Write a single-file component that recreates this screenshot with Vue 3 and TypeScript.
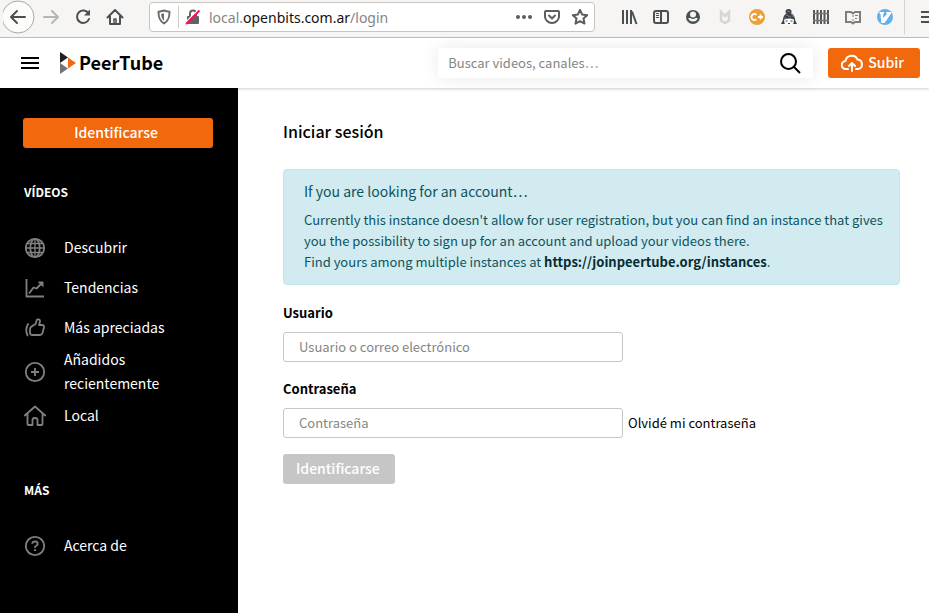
<script setup lang="ts">
import { ref } from 'vue'

interface MenuEntry {
  label: string
  icon: 'globe' | 'trending' | 'like' | 'add' | 'home' | 'help'
}

interface MenuSection {
  title: string
  entries: MenuEntry[]
}

const sections: MenuSection[] = [
  {
    title: 'Vídeos',
    entries: [
      { label: 'Descubrir', icon: 'globe' },
      { label: 'Tendencias', icon: 'trending' },
      { label: 'Más apreciadas', icon: 'like' },
      { label: 'Añadidos recientemente', icon: 'add' },
      { label: 'Local', icon: 'home' },
    ],
  },
  {
    title: 'Más',
    entries: [{ label: 'Acerca de', icon: 'help' }],
  },
]

const search = ref('')
const username = ref('')
const password = ref('')
</script>

<template>
  <div class="window">
    <div class="toolbar">
      <div class="nav-buttons">
        <button type="button" class="tool back" aria-label="Atrás">
          <svg width="32" height="34" viewBox="0 0 32 34" fill="none">
            <circle cx="15" cy="17" r="16" fill="#fcfcfb" stroke="#aaa8a6" />
            <path d="M14 11 8 17l6 6M8 17H22" stroke="#4a4f52" stroke-width="2" stroke-linecap="round" stroke-linejoin="round" />
          </svg>
        </button>
        <button type="button" class="tool" aria-label="Adelante">
          <svg width="18" height="18" viewBox="0 0 18 18" fill="none" stroke="#b5b6b6" stroke-width="2" stroke-linecap="round" stroke-linejoin="round">
            <path d="M2 9h14M10 3l6 6-6 6" />
          </svg>
        </button>
        <button type="button" class="tool" aria-label="Recargar">
          <svg width="18" height="18" viewBox="0 0 18 18" fill="none" stroke="#4a4f52" stroke-width="2">
            <path d="M14.500 5.500A6.200 6.200 0 1 0 15 11" stroke-linecap="round" />
            <path d="M16 1.500v6h-6z" fill="#4a4f52" stroke="none" />
          </svg>
        </button>
        <button type="button" class="tool" aria-label="Inicio">
          <svg width="18" height="18" viewBox="0 0 18 18" fill="none" stroke="#4a4f52" stroke-width="2" stroke-linecap="round" stroke-linejoin="round">
            <path d="M1.500 9.500 9 2l7.500 7.500M4 8v8h10V8" />
            <path d="M8 16v-5h2v5" stroke-width="1.500" />
          </svg>
        </button>
      </div>

      <div class="address">
        <svg width="16" height="16" viewBox="0 0 16 16" fill="none">
          <path d="M8 1.500c2 .8 3.600 1.100 5.500 1.200 0 5.500-.8 9-5.500 11.800C3.300 11.700 2.500 8.200 2.500 2.700 4.400 2.600 6 2.300 8 1.500z" stroke="#6b6b6b" stroke-width="2" stroke-linejoin="round" />
          <path d="M8 4.300v7.400C5.800 10 5.300 8 5.200 5z" fill="#6b6b6b" />
        </svg>
        <span class="address-rule"></span>
        <svg width="16" height="16" viewBox="0 0 16 16" fill="none">
          <path d="M5 8V4.500a3 3 0 0 1 6 0V8" stroke="#636363" stroke-width="2" />
          <rect x="2" y="7" width="12" height="8" rx="1" fill="#636363" />
          <path d="M1 13.500 13 1.500" stroke="#fff" stroke-width="2" />
          <path d="M1 15 14.500 1.500" stroke="#f5134d" stroke-width="2" />
        </svg>
        <span class="url">local.<b>openbits.com.ar</b>/login</span>
        <button type="button" class="address-tool" aria-label="Acciones de página">
          <svg width="18" height="18" viewBox="0 0 18 18" fill="#5c5c5c">
            <circle cx="3" cy="9" r="2" /><circle cx="9" cy="9" r="2" /><circle cx="15" cy="9" r="2" />
          </svg>
        </button>
        <button type="button" class="address-tool" aria-label="Pocket">
          <svg width="18" height="18" viewBox="0 0 18 18" fill="none" stroke="#5c5c5c" stroke-width="2" stroke-linecap="round" stroke-linejoin="round">
            <path d="M3 3h12q1 0 1 1v4.500a7 6.500 0 0 1-14 0V4q0-1 1-1z" />
            <path d="M6 7.500 9 10.500l3-3" />
          </svg>
        </button>
        <button type="button" class="address-tool" aria-label="Marcador">
          <svg width="18" height="18" viewBox="0 0 18 18" fill="none" stroke="#5c5c5c" stroke-width="2" stroke-linejoin="round">
            <path d="m9 2 2.200 4.600 5 .6-3.700 3.400 1 5L9 13.200l-4.500 2.400 1-5L1.800 7.200l5-.6z" />
          </svg>
        </button>
      </div>

      <div class="extensions">
        <button type="button" class="tool" aria-label="Biblioteca">
          <svg width="18" height="18" viewBox="0 0 18 18" fill="none" stroke="#4a4f52" stroke-width="2">
            <path d="M3 2v14M7 2v14M11 2v14M12 3.500 16.500 16" />
          </svg>
        </button>
        <button type="button" class="tool" aria-label="Barra lateral">
          <svg width="18" height="18" viewBox="0 0 18 18" fill="none" stroke="#4a4f52" stroke-width="2">
            <rect x="2" y="3" width="14" height="12" rx="2" />
            <path d="M9 3v12" />
            <path d="M4 5.500h3M4 7.500h3M4 9.500h3" stroke-width="1" />
          </svg>
        </button>
        <button type="button" class="tool" aria-label="Cuenta">
          <svg width="18" height="18" viewBox="0 0 18 18">
            <circle cx="9" cy="9" r="7" fill="#4a4f52" />
            <circle cx="9" cy="6.500" r="3" fill="#f6f5f4" />
            <path d="M4.300 10h2.200q2.500 2 5 0h2.200q-.8 3.500-4.700 3.500T4.300 10z" fill="#f6f5f4" />
          </svg>
        </button>
        <button type="button" class="tool" aria-label="Protección web">
          <svg width="18" height="18" viewBox="0 0 18 18" fill="none" stroke="#d6d6d5" stroke-width="2.500">
            <path d="M5 12.500V4l4 4 4-4v8.500L9 15z" />
          </svg>
        </button>
        <button type="button" class="tool" aria-label="C+">
          <svg width="18" height="18" viewBox="0 0 18 18" fill="none" stroke="#fff" stroke-width="1.800">
            <circle cx="9" cy="9" r="8" fill="#eba03a" stroke="none" />
            <path d="M8.500 6.800a3 3 0 1 0 0 4.400M10 9h5M12.500 6.500v5" />
          </svg>
        </button>
        <button type="button" class="tool" aria-label="Gestor de notas">
          <svg width="18" height="18" viewBox="0 0 18 18">
            <path d="M9 5c4 0 6 3.500 6 7l2 4H1l2-4c0-3.500 2-7 6-7z" fill="#3c3f43" />
            <ellipse cx="8.500" cy="3.500" rx="3" ry="2.500" fill="#3c3f43" />
            <path d="M4 11.500q5-2 10 0l-.5 4q-4.500 2.500-9 0z" fill="#fff" />
            <path d="m6 7 5 2M7 3l3 1M11.500 6.500l2.500 3M4.500 9.500l2 1" stroke="#678aa8" />
            <path d="M5.500 13h2M10.500 13h2M8 15.500h2" stroke="#3c3f43" />
          </svg>
        </button>
        <button type="button" class="tool" aria-label="Contenedores">
          <svg width="18" height="18" viewBox="0 0 18 18" stroke="#555" stroke-width="2">
            <path d="M2 2v14M5.500 2v14M9 2v14M12.500 2v14M16 2v14" />
            <path d="M1 5.500h16M1 12.500h16" stroke="#777" stroke-width="1.500" />
          </svg>
        </button>
        <button type="button" class="tool" aria-label="Lectura">
          <svg width="18" height="18" viewBox="0 0 18 18" fill="none" stroke="#7d7d7d" stroke-width="2">
            <path d="M2 4h5l2 1.500L11 4h5v10h-5l-2 1.500L7 14H2z" />
            <path d="M9 7v2M9 11v2M11 7.500h3M11 10.500h2" stroke-width="1" />
          </svg>
        </button>
        <button type="button" class="tool" aria-label="Vimium">
          <svg width="18" height="18" viewBox="0 0 18 18">
            <circle cx="9" cy="9" r="8" fill="#62b0e8" />
            <path d="M3.500 4h4.500v1.500l-.8.500v4L11 6l-.8-.5V4h5v1.500L8.500 15H5.300L4.500 6l-1-.5z" fill="#fff" />
          </svg>
        </button>
        <span class="toolbar-rule"></span>
        <button type="button" class="tool menu-tool" aria-label="Menú">
          <svg width="18" height="18" viewBox="0 0 18 18" stroke="#4a4f52" stroke-width="2">
            <path d="M1 4h16M1 9h16M1 14h16" />
          </svg>
        </button>
      </div>
    </div>

    <header class="header">
      <button type="button" class="burger" aria-label="Mostrar menú">
        <svg width="18" height="14" viewBox="0 0 18 14" stroke="#000" stroke-width="2">
          <path d="M0 2h18M0 7h18M0 12h18" />
        </svg>
      </button>
      <a class="brand" href="#">
        <svg width="16" height="22" viewBox="0 0 16 22">
          <path d="M0 0v11l8-5.500z" fill="#211f20" />
          <path d="M0 11v11l8-5.500z" fill="#737373" />
          <path d="M8 5.500v11l8-5.500z" fill="#f1680d" />
        </svg>
        <span>PeerTube</span>
      </a>
      <form class="search" @submit.prevent>
        <input v-model="search" type="text" aria-label="Buscar" placeholder="Buscar videos, canales…" />
        <button type="submit" aria-label="Buscar">
          <svg width="22" height="22" viewBox="0 0 22 22" fill="none" stroke="#000" stroke-width="2">
            <circle cx="9.500" cy="9.500" r="7.500" />
            <path d="m14.500 14.500 6.500 6.500" />
          </svg>
        </button>
      </form>
      <a class="upload" href="#">
        <svg width="22" height="18" viewBox="0 0 22 18" fill="none" stroke="#fff" stroke-width="2" stroke-linecap="round" stroke-linejoin="round">
          <path d="M7 15H5a4 4 0 0 1-.5-8A6.300 6.300 0 0 1 16.500 5.500 4.800 4.800 0 0 1 17 15h-2" />
          <path d="M11 17V9M8 12l3-3 3 3" />
        </svg>
        <span>Subir</span>
      </a>
    </header>

    <div class="body">
      <nav class="sidebar">
        <a class="login-link" href="#">Identificarse</a>
        <section v-for="section in sections" :key="section.title" class="menu-section">
          <h2>{{ section.title }}</h2>
          <a v-for="entry in section.entries" :key="entry.label" class="menu-entry" href="#">
            <svg width="22" height="22" viewBox="0 0 22 22" fill="none" stroke="#808080" stroke-width="1.800" stroke-linejoin="round">
              <template v-if="entry.icon === 'globe'">
                <circle cx="11" cy="11" r="9.200" />
                <ellipse cx="11" cy="11" rx="4.700" ry="9.200" />
                <path d="M11 2v18M2 11h18M3.500 6.500h15M3.500 15.500h15" stroke-width="1.300" />
              </template>
              <template v-else-if="entry.icon === 'trending'">
                <path d="M2.500 2v17.500H20" />
                <path d="m5 16.500 4.500-6 3 1L18 6" />
                <path d="M14.500 5H19v4.500z" fill="#808080" stroke-width="1" />
              </template>
              <template v-else-if="entry.icon === 'like'">
                <path d="M7 10 11.500 7l1.500-4.500q3-.8 3 2L15 8h3q2.500.3 2 2.500L18.500 16q-.7 2-2.500 2H8.500Q6 18 6 15.500v-3Q6 11 7 10z" />
                <path d="M4 7q-3.200 5.500-.5 11.500" stroke-linecap="round" />
              </template>
              <template v-else-if="entry.icon === 'add'">
                <circle cx="11" cy="11" r="9.200" />
                <path d="M11 7v8M7 11h8" />
              </template>
              <template v-else-if="entry.icon === 'home'">
                <path d="m.8 10.500 10.200-9 10.200 9M3.500 8.500V19q0 1 1 1h4v-5q0-2 2.500-2t2.500 2v5h4q1 0 1-1V8.500" stroke-linecap="round" />
              </template>
              <template v-else>
                <circle cx="11" cy="11" r="9.200" />
                <path d="M8.300 8.800q0-2.300 2.700-2.300t2.700 2.200q0 1.300-1.500 2T11 13" />
                <path d="M11 14.300v1.800" stroke-width="2" />
              </template>
            </svg>
            <span>{{ entry.label }}</span>
          </a>
        </section>
      </nav>

      <main class="content">
        <h1>Iniciar sesión</h1>
        <div class="notice">
          <h2>If you are looking for an account…</h2>
          <p>
            Currently this instance doesn't allow for user registration, but you can find an instance that gives you the
            possibility to sign up for an account and upload your videos there.
          </p>
          <p>
            Find yours among multiple instances at
            <a href="https://joinpeertube.org/instances">https://joinpeertube.org/instances</a>.
          </p>
        </div>
        <form class="login-form" @submit.prevent>
          <div class="field">
            <label for="username">Usuario</label>
            <input id="username" v-model="username" type="text" placeholder="Usuario o correo electrónico" />
          </div>
          <div class="field">
            <label for="password">Contraseña</label>
            <div class="field-row">
              <input id="password" v-model="password" type="password" placeholder="Contraseña" />
              <a href="#">Olvidé mi contraseña</a>
            </div>
          </div>
          <button type="submit" :disabled="!username || !password">Identificarse</button>
        </form>
      </main>
    </div>
  </div>
</template>

<style>
body {
  background: #fff;
}
</style>

<style scoped>
* {
  box-sizing: border-box;
}

.window {
  display: flex;
  flex-direction: column;
  min-height: 100vh;
  overflow: hidden;
  color: #000;
  font-family: "Noto Sans CJK SC", "Noto Sans", sans-serif;
  font-size: 14px;
}

button,
input {
  margin: 0;
  padding: 0;
  border: 0;
  background: none;
  font-family: inherit;
}

a {
  color: inherit;
  text-decoration: none;
}

h1,
h2,
p {
  margin: 0;
}

svg {
  display: block;
  flex: none;
}

/* Browser toolbar */
.toolbar {
  display: flex;
  gap: 18px;
  height: 38px;
  padding: 0 0 3px 3px;
  border-bottom: 1px solid #c8c4bf;
  background: #f6f5f4;
}

.nav-buttons,
.extensions {
  display: flex;
  align-items: center;
}

.extensions {
  width: 316px;
}

.tool {
  display: flex;
  flex: none;
  align-items: center;
  justify-content: center;
  width: 32px;
  height: 34px;
}

.toolbar-rule {
  flex: none;
  width: 1px;
  height: 34px;
  margin-left: 3px;
  background: #d6d3cf;
}

.menu-tool {
  margin-left: 8px;
}

.address {
  display: flex;
  flex: 1;
  align-items: center;
  min-width: 0;
  height: 30px;
  margin-top: 2px;
  padding-left: 6px;
  border: 1px solid #c8c4bf;
  border-radius: 4px;
  background: #fff;
}

.address-rule {
  width: 1px;
  height: 22px;
  margin: 0 6px;
  background: #d0cbc5;
}

.url {
  flex: 1;
  min-width: 0;
  margin-left: 8px;
  padding-top: 1px;
  overflow: hidden;
  color: #858585;
  font-family: "Noto Sans", sans-serif;
  font-size: 14px;
  line-height: 22px;
  white-space: nowrap;
}

.url b {
  color: #111;
  font-weight: 400;
}

.address-tool {
  display: flex;
  justify-content: center;
  width: 28px;
}

/* Application header */
.header {
  display: flex;
  align-items: center;
  height: 50px;
  padding: 0 9px 0 21px;
  box-shadow: 0 1px 3px rgba(0, 0, 0, 0.2);
}

.brand {
  display: flex;
  align-items: center;
  gap: 3px;
  margin-left: 21px;
  font-size: 18px;
  font-weight: 700;
  line-height: 24px;
}

.brand span {
  padding-bottom: 2px;
}

.search {
  display: flex;
  width: 375px;
  height: 30px;
  margin-left: auto;
  padding: 0 12px 0 10px;
  border-radius: 3px;
  background: #fff;
  box-shadow: 0 0 18px rgba(0, 0, 0, 0.09);
}

.search input {
  flex: 1;
  min-width: 0;
  padding-bottom: 2px;
  font-size: 13px;
  outline: 0;
}

input::placeholder {
  color: #858585;
  opacity: 1;
}

.search button {
  display: flex;
  align-items: center;
}

.upload {
  display: flex;
  align-items: center;
  gap: 5px;
  height: 30px;
  margin-left: 15px;
  padding: 0 16px 0 13px;
  border-radius: 3px;
  background: #f1680d;
  color: #fff;
  font-size: 14px;
  font-weight: 500;
}

.upload span {
  padding-bottom: 2px;
}

/* Page body */
.body {
  display: flex;
  flex: 1;
}

.sidebar {
  position: relative;
  flex: none;
  width: 238px;
  padding: 30px 25px 30px 23px;
  background: #000;
  color: #fff;
}

.login-link {
  display: block;
  height: 30px;
  margin-bottom: 32px;
  padding-right: 4px;
  border-radius: 3px;
  background: #f1680d;
  font-weight: 500;
  line-height: 28px;
  text-align: center;
}

.menu-section {
  margin-bottom: 42px;
}

.menu-section h2 {
  margin: 0 1px 24px;
  font-size: 12px;
  font-weight: 700;
  line-height: 24px;
  text-transform: uppercase;
}

.menu-entry {
  display: flex;
  align-items: center;
  gap: 18px;
  min-height: 40px;
  padding-left: 1px;
  line-height: 24px;
}

.menu-entry span {
  margin: -1px 0 1px;
}

.content {
  flex: 1;
  min-width: 0;
  padding: 31px 29px 32px 45px;
}

h1 {
  font-size: 16px;
  font-weight: 500;
  line-height: 24px;
}

.notice {
  margin: 26px 0 17px;
  padding: 11px 12px 12px 20px;
  border: 1px solid #bee5eb;
  border-radius: 4px;
  background: #d1ebf0;
  color: #0c5460;
  font-size: 13px;
  line-height: 21px;
}

.notice h2 {
  margin-bottom: 8px;
  font-size: 14px;
  font-weight: 400;
  line-height: 20px;
}

.notice a {
  color: #062c33;
  font-weight: 700;
}

.login-form {
  display: flex;
  flex-direction: column;
  align-items: flex-start;
  gap: 16px;
}

.field {
  display: flex;
  flex-direction: column;
  gap: 9px;
}

.field label {
  font-size: 13px;
  font-weight: 700;
  line-height: 21px;
}

.field-row {
  display: flex;
  align-items: center;
  gap: 5px;
  font-size: 13px;
}

.field-row a {
  padding-bottom: 1px;
}

.field input {
  width: 340px;
  height: 30px;
  padding: 0 15px 2px;
  border: 1px solid #c6c6c6;
  border-radius: 3px;
  background: #fff;
  font-size: 13px;
}

.login-form button {
  height: 30px;
  padding: 0 15px 2px 13px;
  border-radius: 3px;
  background: #c6c6c6;
  color: #fff;
  font-size: 14px;
  font-weight: 500;
}
</style>
